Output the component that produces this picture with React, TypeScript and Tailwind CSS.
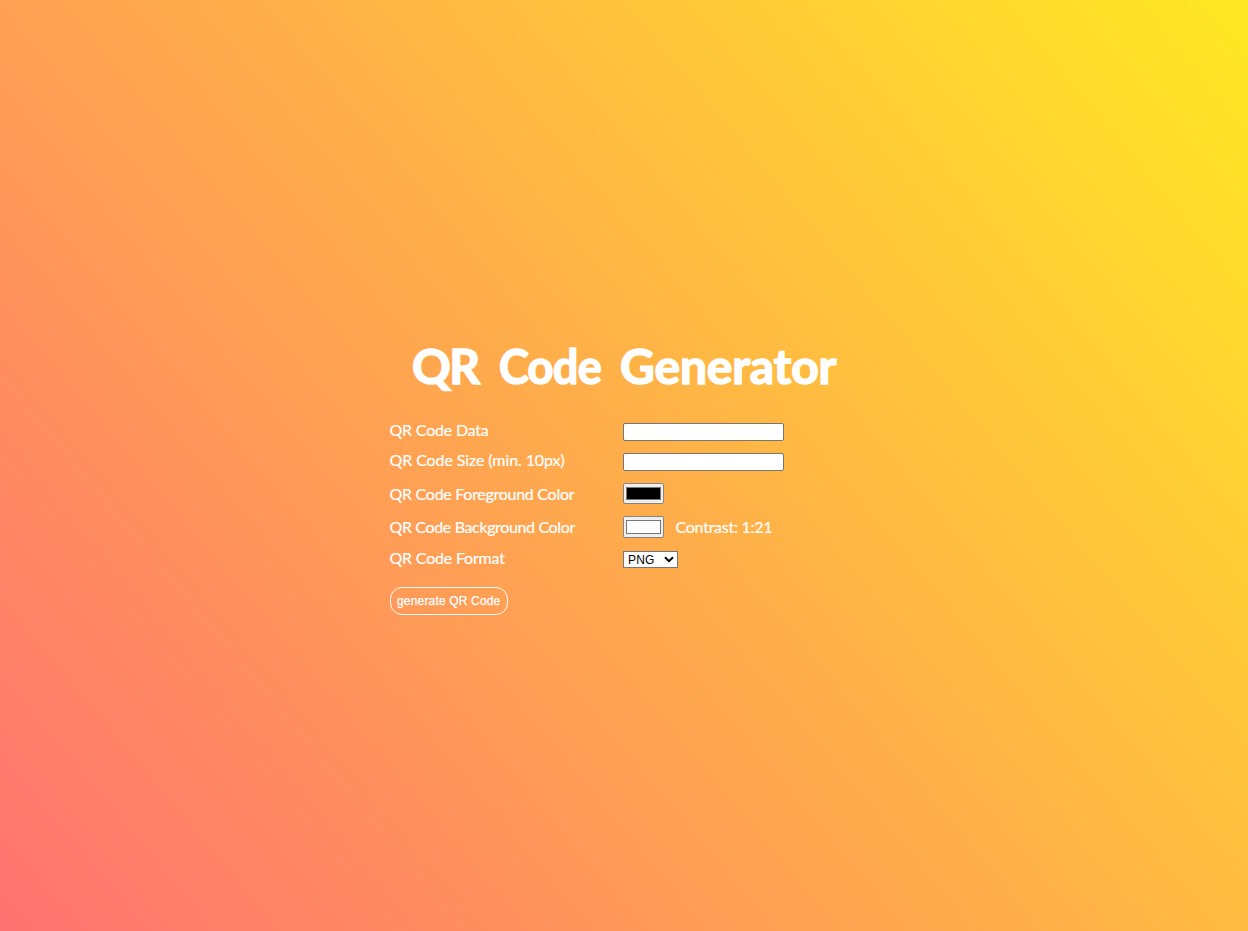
import { useState } from "react";

const field = "h-[18px] w-[161px] rounded-[2px] border border-[#767676] bg-white px-1 text-xs text-black outline-none";
const labelText = "pl-[0.5px] text-[16px] leading-5 whitespace-nowrap [-webkit-text-stroke:0.2px_white]";

function Swatch({ color, label, onChange, className }: { color: string; label: string; onChange: (v: string) => void; className: string }) {
  return (
    <label className={`flex w-[41px] rounded-[2px] border border-[#858585] bg-[#efefef] px-[2px] py-[3px] ${className}`}>
      <span className="block h-full w-full border border-[#777777]" style={{ backgroundColor: color }} />
      <input type="color" aria-label={label} value={color} onChange={(e) => onChange(e.target.value)} className="sr-only" />
    </label>
  );
}

export default function App() {
  const [fg, setFg] = useState("#000000");
  const [bg, setBg] = useState("#ffffff");

  return (
    <main className="h-screen min-h-[640px] w-full overflow-hidden bg-[linear-gradient(50deg,#ff7272,#ffe923)] pt-[335px] font-['Lato',sans-serif] text-white">
      <div className="mx-auto w-[470px]">
        <h1 className="flex h-[62px] justify-center gap-[19px] text-[48px] leading-[62px] font-bold [-webkit-text-stroke:1.5px_white] [stroke-linejoin:round]">
          <span className="w-[68px] tracking-[-1.5px] whitespace-nowrap">QR </span>
          <span className="w-[102px] origin-left scale-x-[0.94] tracking-[-0.8px] whitespace-nowrap">Code </span>
          <span className="w-[216px] tracking-[-0.15px] whitespace-nowrap">Generator</span>
        </h1>
        <form className="mt-[26px]" onSubmit={(e) => e.preventDefault()}>
          <div className="grid grid-cols-[234px_1fr] grid-rows-[18px_18px_21px_22px_17px] gap-y-[12px]">
            <label className={`${labelText} -mt-[3px] tracking-[-0.2px]`}>QR Code Data</label>
            <input aria-label="Data" className={field} />
            <label className={`${labelText} -mt-[3px] tracking-[-0.1px]`}>QR Code Size (min. 10px)</label>
            <input aria-label="Size" className={field} />
            <span className={`${labelText} mt-[1px] tracking-[-0.28px]`}>QR Code Foreground Color</span>
            <Swatch color={fg} label="Foreground" onChange={setFg} className="h-[21px]" />
            <span className={`${labelText} mt-[1px] tracking-[-0.36px]`}>QR Code Background Color</span>
            <div className="flex gap-[11px]">
              <Swatch color={bg} label="Background" onChange={setBg} className="h-[22px]" />
              <span className={`${labelText} mt-[1px] tracking-[-0.25px]`}>Contrast: 1:21</span>
            </div>
            <span className={`${labelText} -mt-[2px] tracking-[-0.2px]`}>QR Code Format</span>
            <button type="button" className="mt-px flex h-[17px] w-[55px] items-center justify-between border border-[#767676] bg-white pr-[3px] pl-1 font-['Liberation_Sans',sans-serif] text-[12px] leading-[15px] text-black">
              <span className="pt-px tracking-[0.2px]">PNG</span>
              <svg viewBox="0 0 10 7" className="h-[7px] w-[10px]" fill="none" stroke="black" strokeWidth="2">
                <path d="M1 1.2 5 5.2 9 1.2" />
              </svg>
            </button>
          </div>
          <button type="submit" className="mt-[20px] ml-[0.5px] flex h-[28px] w-[118.5px] items-center justify-center rounded-[12px] border border-white font-['Liberation_Sans',sans-serif] text-[12px] tracking-[0.17px] whitespace-nowrap [-webkit-text-stroke:0.25px_white]">
            generate QR Code
          </button>
        </form>
      </div>
    </main>
  );
}
